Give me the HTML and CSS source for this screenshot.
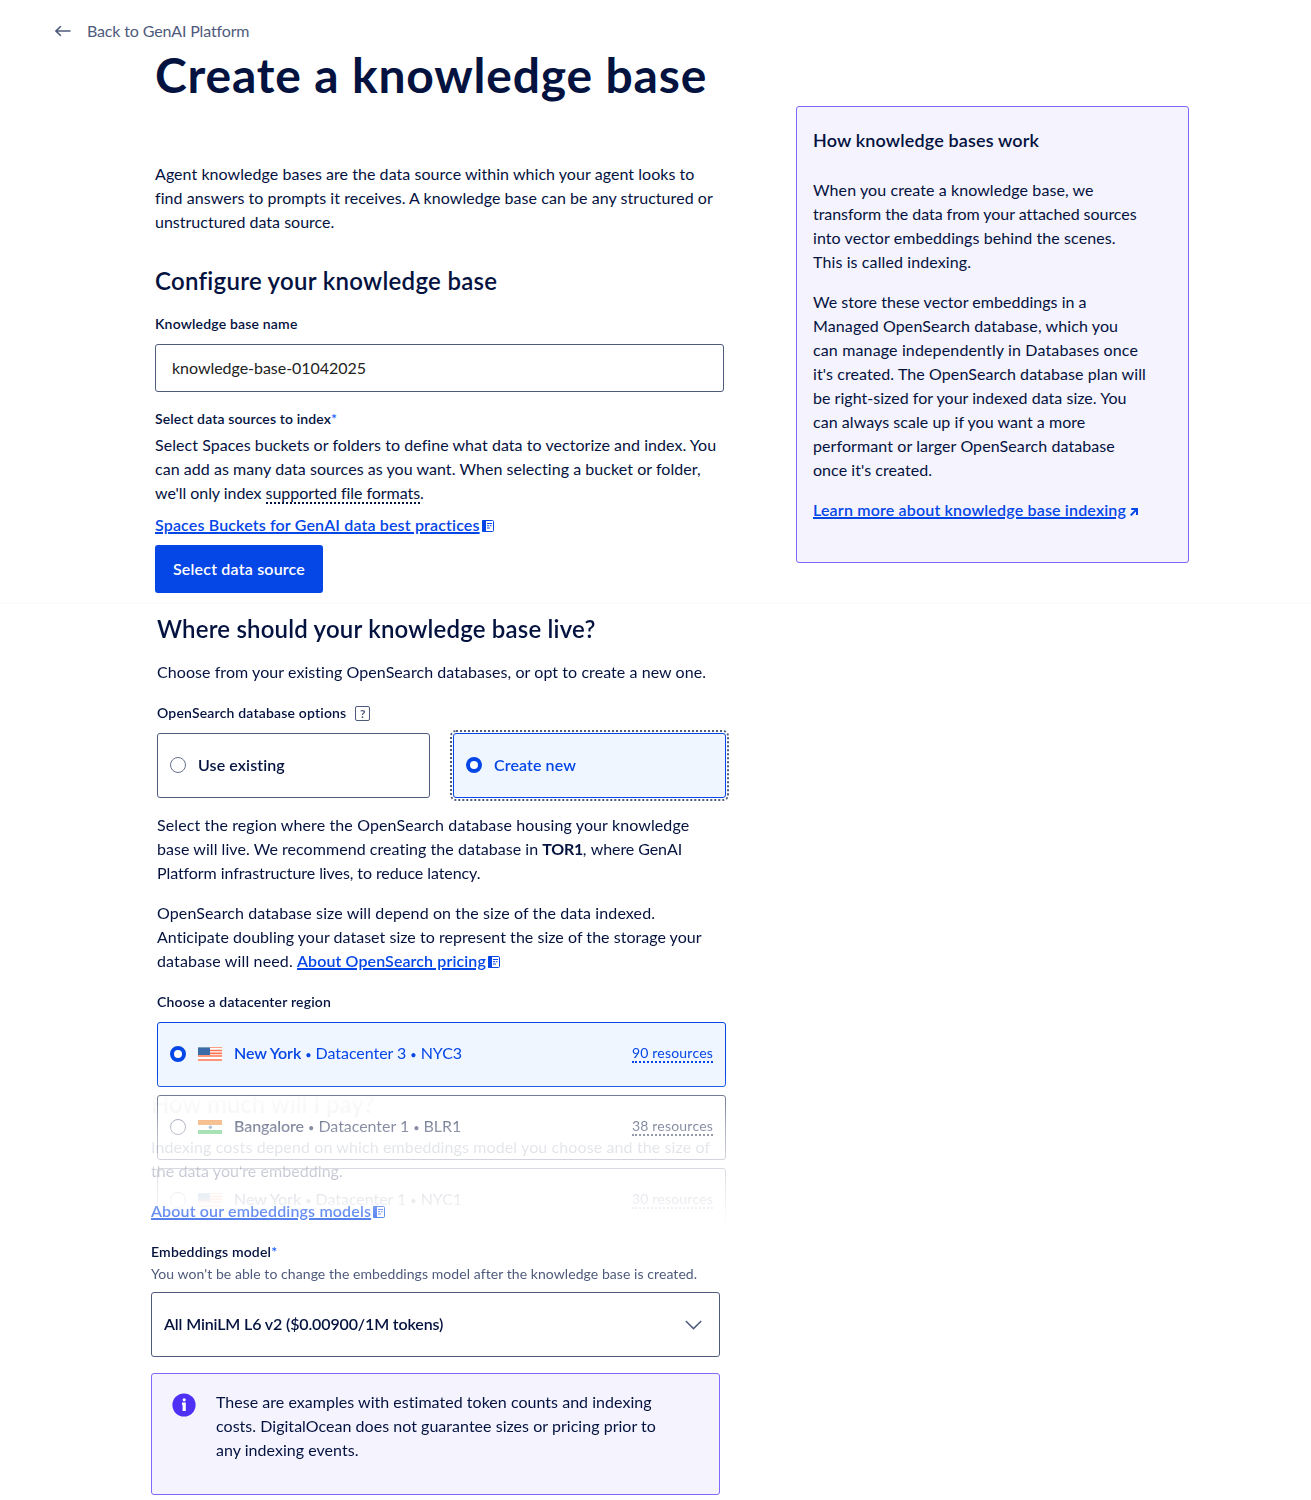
FILE: index.html
```html
<!DOCTYPE html>
<html lang="en">
<head>
<meta charset="utf-8">
<title>Create a knowledge base</title>
<link rel="stylesheet" href="styles.css">
</head>
<body>
<svg class="defs" width="0" height="0" aria-hidden="true">
  <symbol id="doc" viewBox="0 0 12 12">
    <path d="M1.5 0.5h9a1 1 0 0 1 1 1v9a1 1 0 0 1-1 1h-9a1 1 0 0 1-1-1v-9a1 1 0 0 1 1-1z" fill="none" stroke="currentColor"/>
    <path d="M1 0h3v12H1a1 1 0 0 1-1-1V1a1 1 0 0 1 1-1z" fill="currentColor"/>
    <path d="M5 3.5h5M5 5.7h2M7.8 5.7h1.7M5 8h3" stroke="currentColor" fill="none"/>
  </symbol>
  <symbol id="flag-us" viewBox="0 0 24 14">
    <rect width="24" height="14" fill="#fff"/>
    <path d="M0 .5h24" stroke="#ff9c84"/>
    <path d="M0 3.5h24M0 6.3h24M0 9h24M0 13h24" stroke="#ff7350" stroke-width="1.7"/>
    <rect width="12" height="8" fill="#3c6ca8"/>
    <path d="M0 .5h12" stroke="#7d9dc4"/>
  </symbol>
  <symbol id="flag-in" viewBox="0 0 24 14">
    <rect width="24" height="14" fill="#fff"/>
    <rect width="24" height="5" fill="#ee8a34"/>
    <rect y="10" width="24" height="4" fill="#3cbd59"/>
    <circle cx="12.4" cy="7.3" r="1.7" fill="#5c82b8"/>
  </symbol>
</svg>

<section class="top">
  <a class="back">
    <svg width="16" height="12" viewBox="0 0 16 12"><path d="M15.5 6H1M5.8 1.3L1 6l4.8 4.7" fill="none" stroke="currentColor" stroke-width="1.6"/></svg>
    <span>Back to GenAI Platform</span>
  </a>
  <div class="columns">
    <main class="column">
      <h1>Create a knowledge base</h1>
      <p class="intro"><span class="line l4">Agent knowledge bases are the data source within which your agent looks to</span><span class="line l4">find answers to prompts it receives. A knowledge base can be any structured or</span><span class="line">unstructured data source.</span></p>
      <h2 class="h-config">Configure your knowledge base</h2>
      <label class="label" for="name">Knowledge base name</label>
      <input id="name" class="input" type="text" value="knowledge-base-01042025">
      <div class="label label-sources">Select data sources to index<span class="req">*</span></div>
      <p class="desc"><span class="line l4">Select Spaces buckets or folders to define what data to vectorize and index. You</span><span class="line l4">can add as many data sources as you want. When selecting a bucket or folder,</span><span class="line tight">we'll only index <span class="dotted">supported file formats</span>.</span></p>
      <div class="linkrow"><a class="link">Spaces Buckets for GenAI data best practices</a><svg class="doc"><use href="#doc"/></svg></div>
      <button class="button">Select data source</button>
    </main>
    <aside class="aside">
      <h3>How knowledge bases work</h3>
      <p><span class="line l8">When you create a knowledge base, we</span><span class="line tight">transform the data from your attached sources</span><span class="line l8">into vector embeddings behind the scenes.</span><span class="line l10">This is called indexing.</span></p>
      <p><span class="line l3">We store these vector embeddings in a</span><span class="line l10">Managed OpenSearch database, which you</span><span class="line l13">can manage independently in Databases once</span><span class="line l8">it's created. The OpenSearch database plan will</span><span class="line l3">be right-sized for your indexed data size. You</span><span class="line l4">can always scale up if you want a more</span><span class="line l8">performant or larger OpenSearch database</span><span class="line l4">once it's created.</span></p>
      <div><a class="link">Learn more about knowledge base indexing</a><svg class="ext" width="8" height="8" viewBox="0 0 8 8"><path d="M1.2 1.1h5.8v5.9M6.6 1.4L.7 7.4" fill="none" stroke="currentColor" stroke-width="2"/></svg></div>
    </aside>
  </div>
</section>

<section class="live">
  <h2 class="h-live">Where should your knowledge base live?</h2>
  <p class="choose">Choose from your existing OpenSearch databases, or opt to create a new one.</p>
  <div class="label label-help"><span>OpenSearch database options</span><span class="help">?</span></div>
  <div class="options">
    <div class="card"><span class="radio"></span><b>Use existing</b></div>
    <div class="card on focus"><span class="radio"></span><b>Create new</b></div>
  </div>
  <p class="region"><span class="line l10">Select the region where the OpenSearch database housing your knowledge</span><span class="line l4">base will live. We recommend creating the database in <strong>TOR1</strong>, <span class="tighter">where GenAI</span></span><span class="line tighter">Platform infrastructure lives, to reduce latency.</span></p>
  <p class="size"><span class="line l10">OpenSearch database size will depend on the size of the data indexed.</span><span class="line l3">Anticipate doubling your dataset size to represent the size of the storage your</span><span class="line l13">database will need. <a class="link">About OpenSearch pricing</a><svg class="doc"><use href="#doc"/></svg></span></p>
  <div class="label label-dc">Choose a datacenter region</div>
  <div class="regions">
    <div class="card on"><span class="radio"></span><svg class="flag"><use href="#flag-us"/></svg><span class="city"><b>New York</b> <i>•</i> Datacenter 3 <i>•</i> NYC3</span><span class="res">90 resources</span></div>
    <div class="card"><span class="radio"></span><svg class="flag"><use href="#flag-in"/></svg><span class="city"><b>Bangalore</b> <i>•</i> Datacenter 1 <i>•</i> BLR1</span><span class="res">38 resources</span></div>
    <div class="card"><span class="radio"></span><svg class="flag"><use href="#flag-us"/></svg><span class="city"><b>New York</b> <i>•</i> Datacenter 1 <i>•</i> NYC1</span><span class="res">30 resources</span></div>
  </div>
</section>

<section class="pay">
  <h2 class="h-pay">How much will I pay?</h2>
  <p class="costs"><span class="line l10">Indexing costs depend on which embeddings model you choose and the size of</span><span class="line l4">the data you're embedding.</span></p>
  <div class="linkrow"><a class="link">About our embeddings models</a><svg class="doc"><use href="#doc"/></svg></div>
  <div class="label label-model">Embeddings model<span class="req">*</span></div>
  <div class="hint">You won't be able to change the embeddings model after the knowledge base is created.</div>
  <div class="card select"><b>All MiniLM L6 v2 ($0.00900/1M tokens)</b><svg width="17" height="10" viewBox="0 0 17 10"><path d="M.8 1l7.7 7.6L16.2 1" fill="none" stroke="currentColor" stroke-width="1.5"/></svg></div>
  <div class="alert">
    <svg width="24" height="24" viewBox="0 0 24 24"><circle cx="12" cy="12" r="11.6" fill="#4f31f5"/><circle cx="12.2" cy="6.8" r="1.6" fill="#fff"/><path d="M10 9.6h3.8V18h-3.2v-6H10z" fill="#fff"/></svg>
    <p><span class="line l3">These are examples with estimated token counts and indexing</span><span class="line l3">costs. DigitalOcean does not guarantee sizes or pricing prior to</span><span class="line l3">any indexing events.</span></p>
  </div>
</section>
</body>
</html>
```
FILE: styles.css
```css
* { box-sizing: border-box; }
body {
  margin: 0;
  background: #fff;
  color: #04123f;
  font: 16px/24px Lato, "Liberation Sans", sans-serif;
}
h1, h2, h3, p { margin: 0; }
.defs { display: block; height: 0; }

.line { display: block; white-space: nowrap; }
.tighter { letter-spacing: -0.08px; }
.tight { letter-spacing: -0.05px; }
.l3 { letter-spacing: 0.03px; }
.l4 { letter-spacing: 0.05px; }
.l8 { letter-spacing: 0.09px; }
.l10 { letter-spacing: 0.11px; }
.l13 { letter-spacing: 0.14px; }

/* First panel */
.top { height: 604px; padding: 19px 0 0 55px; border-bottom: 2px solid #fbfbfb; }
.back { display: flex; align-items: center; gap: 16px; color: #4f5b7c; letter-spacing: -0.148px; }
.columns { display: flex; gap: 72px; padding-left: 100px; }
.column { width: 569px; }
h1 { margin-top: 4px; font-size: 48px; line-height: 56px; font-weight: 700; letter-spacing: 0.82px; white-space: nowrap; }
.intro { margin-top: 59px; }
h2 { font-size: 24px; line-height: 32px; font-weight: 600; white-space: nowrap; }
.h-config { margin-top: 31px; letter-spacing: 0.29px; }
.label { display: block; margin-top: 17px; font-size: 14px; line-height: 20px; font-weight: 600; letter-spacing: 0.18px; }
.label-sources { letter-spacing: 0.13px; }
.req { color: #1a5cff; }
.input {
  display: block; width: 100%; height: 48px; margin-top: 10px; padding: 0 16px 2px;
  border: 1px solid #4f5b7c; border-radius: 3px; background: #fff;
  color: #222; font: inherit; letter-spacing: -0.035px;
}
.desc { margin-top: 4px; }
.dotted { border-bottom: 2px dotted currentColor; }
.linkrow { display: flex; align-items: center; margin-top: 8px; }
.link { color: #0546e6; font-weight: 600; letter-spacing: 0.15px; text-decoration: underline; text-decoration-thickness: 2px; text-underline-offset: 1px; text-decoration-skip-ink: auto; }
.aside .link { letter-spacing: 0.17px; }
.doc { width: 12px; height: 12px; margin-left: 2px; color: #0546e6; vertical-align: -1px; }
.linkrow .doc { margin-top: 2px; }
.button {
  display: block; width: 168px; height: 48px; margin-top: 8px; padding: 0;
  border: 0; border-radius: 3px; background: #0546e6; color: #fff;
  font: inherit; font-weight: 600; letter-spacing: 0.19px;
}

.aside { width: 393px; height: 457px; margin-top: 63px; padding: 21px 16px; border: 1px solid #8068fa; border-radius: 3px; background: #f4f3fe; }
.aside h3 { margin-bottom: 26px; font-size: 18px; line-height: 24px; font-weight: 600; letter-spacing: 0.15px; }
.aside p { margin-bottom: 16px; }
.ext { margin-left: 4px; color: #0546e6; }

/* Database location */
.live { width: 740px; padding: 9px 14px 0 157px; mask-image: linear-gradient(#000 470px, #000a 505px, #0007 525px, #0004 555px, #0001 600px, transparent 625px); }
.h-live { letter-spacing: 0.19px; }
.choose { margin-top: 15px; white-space: nowrap; letter-spacing: 0.065px; }
.label-help { display: flex; align-items: center; gap: 9px; margin-top: 19px; }
.help { width: 15px; height: 15px; border: 1px solid #4f5b7c; border-radius: 2px; color: #4f5b7c; font-size: 12px; line-height: 13px; font-weight: 700; text-align: center; }
.options { display: grid; grid-template-columns: 273px 273px; gap: 23px; margin-top: 10px; }
.card { display: flex; align-items: center; height: 65px; padding: 0 12px 2px; border: 1px solid #4f5b7c; border-radius: 3px; background: #fff; }
.card b { font-weight: 600; letter-spacing: 0.1px; }
.card.on { border-color: #0546e6; background: #eff6ff; color: #0546e6; }
.card.focus { outline: 2px dotted #4f5b7c; outline-offset: 1px; }
.radio { flex: none; width: 16px; height: 16px; margin-right: 12px; border: 1px solid #66718f; border-radius: 50%; background: #fff; }
.on .radio { border: 4px solid #0546e6; }
.region { margin-top: 15px; }
.region strong { font-weight: 700; letter-spacing: -0.3px; }
.size { margin-top: 16px; }
.size .link { letter-spacing: 0.1px; }
.label-dc { margin-top: 19px; }
.regions { display: grid; gap: 8px; margin-top: 10px; }
.flag { width: 24px; height: 14px; margin-right: 12px; }
.regions b { letter-spacing: -0.1px; }
.city { flex: 1; letter-spacing: -0.05px; }
.city i { font-size: 11px; font-style: normal; }
.res { border-bottom: 2px dotted currentColor; font-size: 14px; line-height: 17px; letter-spacing: 0.2px; }

/* Pricing panel slides over the fading region list */
.pay { position: relative; width: 720px; margin-top: -145px; padding-left: 151px; mask-image: linear-gradient(#0000 0, #00000006 18px, #0000001c 60px, #0003 84px, #0009 125px, #000 160px); }
.h-pay { letter-spacing: -0.03px; }
.costs { margin-top: 15px; }
.pay .linkrow { margin-top: 16px; }
.label-model { margin-top: 19px; }
.hint { margin-top: 2px; color: #4f5b7c; font-size: 14px; line-height: 20px; letter-spacing: 0.07px; white-space: nowrap; }
.select { justify-content: space-between; margin-top: 8px; padding-right: 17px; color: #4f5b7c; }
.select b { color: #04123f; letter-spacing: -0.14px; }
.select svg { margin-top: 2px; }
.alert { display: flex; gap: 20px; height: 122px; margin-top: 16px; padding: 16px 20px; border: 1px solid #8068fa; border-radius: 3px; background: #f4f3fe; }
.alert svg { flex: none; margin-top: 3px; }
```
